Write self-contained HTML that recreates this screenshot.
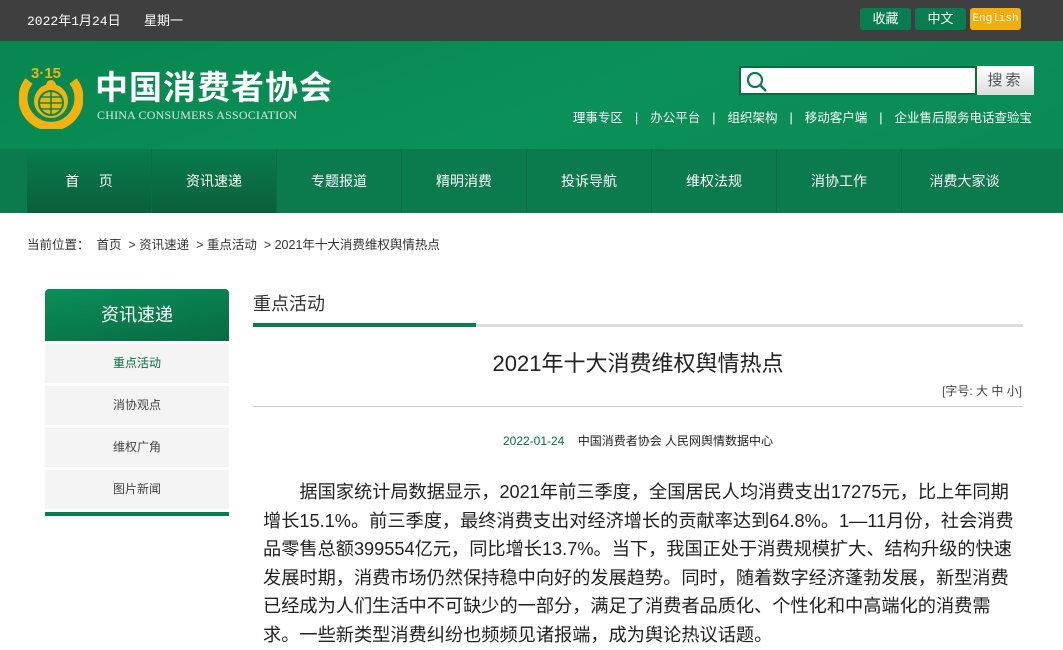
<!DOCTYPE html>
<html><head><meta charset="utf-8"><style>
*{margin:0;padding:0;box-sizing:border-box}
body{width:1063px;height:647px;overflow:hidden;background:#fff;font-family:"Liberation Sans","Noto Sans CJK SC",sans-serif;color:#333}
.top{height:41px;background:#3f3f3f;position:relative;color:#fff;font-size:13px}
.top .d{position:absolute;left:27px;top:10px;font-family:"Liberation Mono","Noto Sans CJK SC",monospace}
.btn{position:absolute;top:8px;height:22px;width:51px;border-radius:3px;background:#0a7d50;color:#fff;font-size:13px;text-align:center;line-height:22px}
.hdr{height:108px;background:linear-gradient(160deg,#07864f 0%,#0a9158 55%,#0a8a54 100%);position:relative}
.logo{position:absolute;left:19px;top:18px}
.cn{position:absolute;left:95px;top:27px;color:#fff;font-size:33px;font-weight:bold;letter-spacing:1px;line-height:40px}
.en{position:absolute;left:97px;top:67px;color:#d8eee2;font-size:12px;font-family:"Liberation Serif",serif;letter-spacing:0.2px}
.search{position:absolute;left:739px;top:25px;width:238px;height:29px;background:#fff;border:2px solid #0b6a40}
.sbtn{position:absolute;left:977px;top:25px;width:57px;height:29px;background:linear-gradient(#fff,#ddd);color:#555;font-size:15px;text-align:center;line-height:29px;letter-spacing:3px}
.links{position:absolute;right:31px;top:66px;color:#fff;font-size:12.5px}
.links span{margin:0 12px}
.nav{height:64px;background:#0b7a4c;position:relative}
.nav div{position:absolute;top:0;width:125px;height:64px;color:#fff;font-size:14px;text-align:center;line-height:64px;border-right:1px solid #0a6d43}
.nav .dk{background:linear-gradient(#087d4c,#0a5f3a)}
.bc{position:absolute;left:27px;top:234px;font-size:12.5px;color:#333}
.side{position:absolute;left:45px;top:289px;width:184px}
.side .h{height:52px;background:linear-gradient(170deg,#0a8f58,#086b41);border-radius:4px 4px 0 0;color:#fff;font-size:18px;text-align:center;line-height:52px}
.side .i{height:39px;margin-top:3px;background:#f4f4f4;font-size:12px;text-align:center;line-height:39px;color:#444}
.side .b{height:4px;background:#0a7d50;margin-top:3px}
.sec{position:absolute;left:253px;top:290px;font-size:18px;color:#333}
.ln1{position:absolute;left:253px;top:324px;width:770px;height:3px;background:#ddd}
.ln1 i{display:block;width:223px;height:4px;background:#0a7d50;margin-top:-1px}
.tt{position:absolute;left:253px;width:770px;top:346px;text-align:center;font-size:22px;color:#222}
.fs{position:absolute;right:41px;top:382px;font-size:12px;color:#444}
.ln2{position:absolute;left:253px;top:406px;width:770px;height:1px;background:#ccc}
.meta{position:absolute;left:253px;width:770px;top:432px;text-align:center;font-size:12px;color:#222}
.txt{position:absolute;left:263px;top:478px;width:780px;font-size:18.2px;line-height:28.6px;color:#222;white-space:nowrap}
</style></head><body>
<div class="top"><span class="d">2022年1月24日&nbsp;&nbsp;&nbsp;星期一</span>
<div class="btn" style="left:860px">收藏</div><div class="btn" style="left:915px">中文</div><div class="btn" style="left:970px;background:#f2ad0e;font-family:'Liberation Mono',monospace;font-size:11px">English</div></div>
<div class="hdr">
<svg class="logo" width="64" height="70" viewBox="0 0 64 70">
<path d="M10 22 A28 28 0 1 0 54 22" fill="none" stroke="#f2b20f" stroke-width="9"/>
<circle cx="32" cy="42" r="17" fill="#f2b20f"/>
<circle cx="32" cy="44" r="12" fill="none" stroke="#0a8a54" stroke-width="2"/>
<path d="M20 44h24M32 32v24M22 38h20M22 50h20" stroke="#0a8a54" stroke-width="1.6"/>
<circle cx="32" cy="26" r="5" fill="#f2b20f"/>
<text x="12" y="19" font-size="15" font-weight="bold" fill="#f2b20f" font-family="Liberation Sans">3·15</text>
</svg>
<div class="cn">中国消费者协会</div>
<div class="en">CHINA CONSUMERS ASSOCIATION</div>
<div class="search"><svg width="24" height="24" style="margin:2px 4px"><circle cx="10" cy="10" r="7" fill="none" stroke="#0a7d50" stroke-width="2.2"/><path d="M15 15l6 6" stroke="#0a7d50" stroke-width="2.5"/></svg></div>
<div class="sbtn">搜索</div>
<div class="links">理事专区<span>|</span>办公平台<span>|</span>组织架构<span>|</span>移动客户端<span>|</span>企业售后服务电话查验宝</div>
</div>
<div class="nav">
<div class="dk" style="left:27px">首&nbsp;&nbsp;&nbsp;&nbsp;&nbsp;页</div><div class="dk" style="left:152px">资讯速递</div><div style="left:277px">专题报道</div><div style="left:402px">精明消费</div><div style="left:527px">投诉导航</div><div style="left:652px">维权法规</div><div style="left:777px">消协工作</div><div style="left:902px;border:0">消费大家谈</div>
</div>
<div class="bc">当前位置：&nbsp;&nbsp;首页&nbsp;&nbsp;&gt; 资讯速递&nbsp;&nbsp;&gt; 重点活动&nbsp;&nbsp;&gt; 2021年十大消费维权舆情热点</div>
<div class="side"><div class="h">资讯速递</div><div class="i" style="color:#0a6d43">重点活动</div><div class="i">消协观点</div><div class="i">维权广角</div><div class="i">图片新闻</div><div class="b"></div></div>
<div class="sec">重点活动</div>
<div class="ln1"><i></i></div>
<div class="tt">2021年十大消费维权舆情热点</div>
<div class="fs">[字号: 大 中 小]</div>
<div class="ln2"></div>
<div class="meta"><span style="color:#0a6d43">2022-01-24</span>&nbsp;&nbsp;&nbsp;&nbsp;中国消费者协会 人民网舆情数据中心</div>
<div class="txt">&emsp;&emsp;据国家统计局数据显示，2021年前三季度，全国居民人均消费支出17275元，比上年同期<br>增长15.1%。前三季度，最终消费支出对经济增长的贡献率达到64.8%。1—11月份，社会消费<br>品零售总额399554亿元，同比增长13.7%。当下，我国正处于消费规模扩大、结构升级的快速<br>发展时期，消费市场仍然保持稳中向好的发展趋势。同时，随着数字经济蓬勃发展，新型消费<br>已经成为人们生活中不可缺少的一部分，满足了消费者品质化、个性化和中高端化的消费需<br>求。一些新类型消费纠纷也频频见诸报端，成为舆论热议话题。</div>
</body></html>
